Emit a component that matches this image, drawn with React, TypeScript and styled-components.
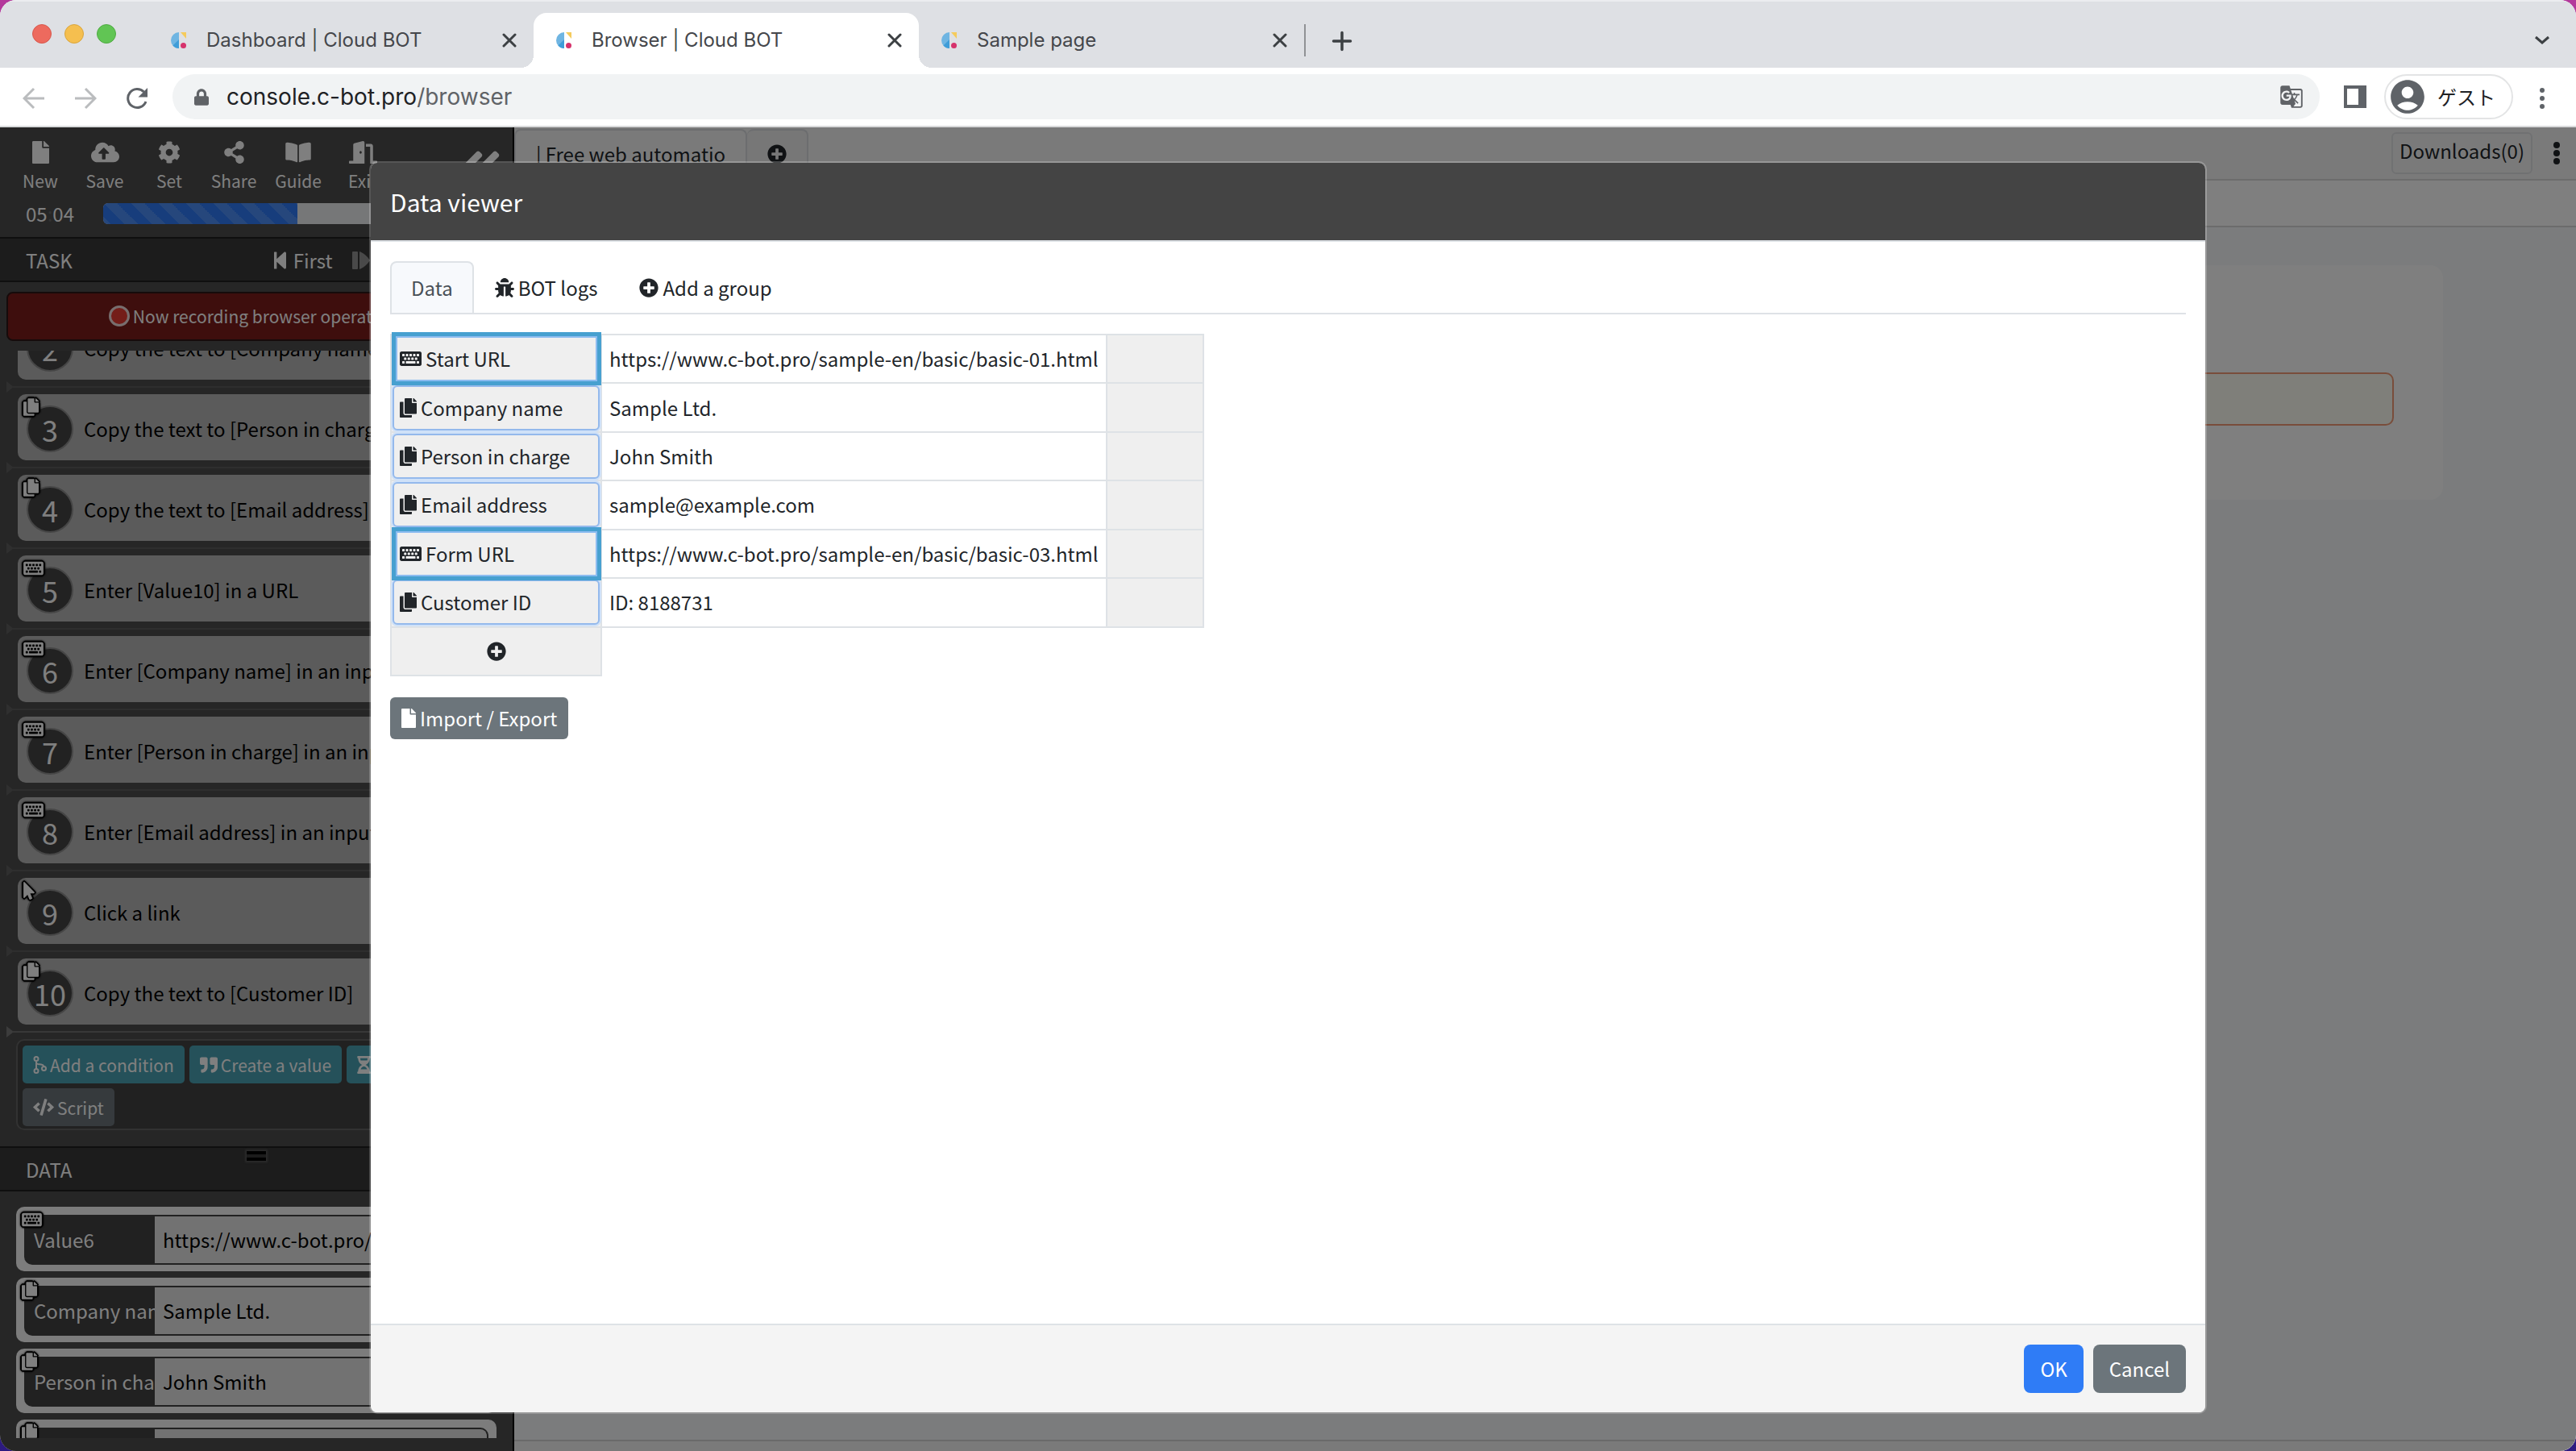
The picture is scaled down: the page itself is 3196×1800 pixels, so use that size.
import React from "react";
import styled, { createGlobalStyle, css } from "styled-components";
import {
  FaAngleDoubleLeft,
  FaBookOpen,
  FaBug,
  FaCloudUploadAlt,
  FaCode,
  FaCog,
  FaCopy,
  FaDoorOpen,
  FaFile,
  FaHourglassHalf,
  FaKeyboard,
  FaLock,
  FaMousePointer,
  FaPlusCircle,
  FaQuoteRight,
  FaShareAlt,
  FaStepBackward,
} from "react-icons/fa";
import { MdAccountCircle, MdGTranslate } from "react-icons/md";

const uiFont = `"Noto Sans CJK JP", "Noto Sans", sans-serif`;
const chromeFont = `Inter, "Noto Sans CJK JP", sans-serif`;

const GlobalStyle = createGlobalStyle`
  *, *::before, *::after { box-sizing: border-box; }
  body { margin: 0; background: linear-gradient(180deg, #b3399b 0%, #7a3aa8 50%, #2c1a80 100%); }
  button, input { font: inherit; color: inherit; margin: 0; padding: 0; border: 0; background: none; }
  button { cursor: pointer; }
  ul, ol { list-style: none; margin: 0; padding: 0; }
  h1, h2 { margin: 0; font-weight: 400; }
  svg { display: block; flex: none; }
`;

/* ---------- glyphs: each has its own width on a 512-unit height ---------- */

const glyphs = {
  file: [FaFile, 384],
  cloud: [FaCloudUploadAlt, 640],
  cog: [FaCog, 512],
  share: [FaShareAlt, 448],
  book: [FaBookOpen, 576],
  door: [FaDoorOpen, 640],
  collapse: [FaAngleDoubleLeft, 448],
  first: [FaStepBackward, 448],
  copy: [FaCopy, 448],
  keyboard: [FaKeyboard, 576],
  pointer: [FaMousePointer, 320],
  quote: [FaQuoteRight, 512],
  hourglass: [FaHourglassHalf, 384],
  code: [FaCode, 640],
  bug: [FaBug, 512],
  plus: [FaPlusCircle, 512],
  lock: [FaLock, 448],
} as const;

type GlyphName = keyof typeof glyphs;

const GlyphBox = styled.span<{ $w: number; $h: number }>`
  display: block;
  flex: none;
  svg {
    width: ${(p) => p.$w}px;
    height: ${(p) => p.$h}px;
  }
`;

const Glyph = ({ name, size = 24 }: { name: GlyphName; size?: number }) => {
  const [Icon, units] = glyphs[name];
  return (
    <GlyphBox $w={Math.round((size * units) / 512)} $h={size}>
      <Icon aria-hidden="true" />
    </GlyphBox>
  );
};

/* ---------- window and tab strip ---------- */

const Window = styled.div`
  display: flex;
  flex-direction: column;
  height: 100vh;
  overflow: hidden;
  border-radius: 20px;
  font: 400 24px/36px ${uiFont};
  color: #212529;
  background: #fff;
`;

const TabStrip = styled.header`
  display: flex;
  align-items: center;
  height: 84px;
  flex: none;
  padding: 0 30px 0 40px;
  background: #dee0e4;
  box-shadow: inset 0 2px 0 #ebecef;
  font-family: ${chromeFont};
`;

const Lights = styled.div`
  display: flex;
  gap: 16px;
  width: 144px;
`;

const Light = styled.button<{ $fill: string; $edge: string }>`
  width: 24px;
  height: 24px;
  border-radius: 50%;
  background: ${(p) => p.$fill};
  border: 1px solid ${(p) => p.$edge};
`;

const StripRow = styled.div`
  display: flex;
  flex: 1;
  align-items: center;
  padding-top: 16px;
`;

const TabList = styled.div`
  display: flex;
`;

const BrowserTab = styled.div<{ $active?: boolean }>`
  position: relative;
  display: flex;
  align-items: center;
  width: 478px;
  height: 68px;
  padding: 0 18px 0 28px;
  color: #45474b;
  ${(p) =>
    p.$active &&
    css`
      background: #fff;
      border-radius: 16px 16px 0 0;
      &::before,
      &::after {
        content: "";
        position: absolute;
        bottom: 0;
        width: 16px;
        height: 16px;
      }
      &::before {
        right: 100%;
        background: radial-gradient(circle at 0 0, transparent 16px, #fff 16px);
      }
      &::after {
        left: 100%;
        background: radial-gradient(circle at 100% 0, transparent 16px, #fff 16px);
      }
    `}
`;

const TabTitle = styled.button`
  flex: 1;
  padding-left: 24px;
  text-align: left;
  font-size: 24px;
  white-space: nowrap;
`;

const IconButton = styled.button`
  display: grid;
  place-items: center;
  flex: none;
  width: 24px;
  height: 24px;
`;

const TabDivider = styled.span`
  width: 2px;
  height: 40px;
  margin-right: 32px;
  background: #909295;
`;

const Spacer = styled.span`
  flex: 1;
`;

/* ---------- address row ---------- */

const AddressRow = styled.div`
  display: flex;
  align-items: center;
  height: 74px;
  flex: none;
  padding: 0 30px 0 28px;
  border-bottom: 2px solid #d8d9da;
  font-family: ${chromeFont};
`;

const NavButtons = styled.nav`
  display: flex;
  gap: 40px;
  width: 186px;
`;

const Omnibox = styled.div`
  display: flex;
  align-items: center;
  flex: 1;
  height: 56px;
  margin-right: 30px;
  padding: 0 20px 0 27px;
  border-radius: 28px;
  background: #f1f3f4;
  font-size: 28px;
  color: #606367;
`;

const Address = styled.span`
  flex: 1;
  padding-left: 22px;
  b {
    font-weight: 400;
    color: #202124;
  }
`;

const Profile = styled.button`
  display: flex;
  align-items: center;
  gap: 12px;
  height: 56px;
  margin: 0 24px 0 22px;
  padding: 0 20px 0 2px;
  border: 2px solid #e3e4e5;
  border-radius: 28px;
  color: #202124;
  font: 400 24px/36px ${uiFont};
  svg {
    color: #5f6368;
  }
`;

/* ---------- application ---------- */

const AppArea = styled.div`
  position: relative;
  display: flex;
  flex: 1;
  min-height: 0;
`;

const Sidebar = styled.aside`
  display: flex;
  flex-direction: column;
  flex: none;
  width: 638px;
  padding-bottom: 16px;
  border-right: 2px solid #000;
  background: #4c4c4c;
  color: #fff;
`;

const ToolRow = styled.div`
  display: flex;
  height: 90px;
  padding: 17px 14px 0 10px;
`;

const Tool = styled.button`
  display: flex;
  flex-direction: column;
  align-items: center;
  gap: 3px;
  width: 80px;
  font-size: 21px;
  line-height: 36px;
`;

const Collapse = styled.button`
  display: flex;
  margin-left: auto;
  padding-top: 2px;
`;

const TimerRow = styled.div`
  display: flex;
  align-items: center;
  gap: 36px;
  height: 46px;
  padding: 0 26px 12px 32px;
  i {
    font-style: normal;
    color: #646464;
  }
`;

const Progress = styled.div`
  flex: 1;
  height: 26px;
  overflow: hidden;
  border-radius: 6px;
  background: #eceef1;
`;

const ProgressFill = styled.div`
  height: 100%;
  background: #2e7af8
    linear-gradient(
      45deg,
      rgba(255, 255, 255, 0.15) 25%,
      transparent 25%,
      transparent 50%,
      rgba(255, 255, 255, 0.15) 50%,
      rgba(255, 255, 255, 0.15) 75%,
      transparent 75%
    );
  background-size: 34px 34px;
`;

const SectionBar = styled.div`
  position: relative;
  display: flex;
  align-items: center;
  flex: none;
  height: 56px;
  padding: 1px 32px 0;
  border: solid #1e1e1e;
  border-width: 2px 0;
  background: #383838;
`;

const SectionTitle = styled.h2`
  font-size: 24px;
  line-height: 36px;
`;

const StepButtons = styled.div`
  display: flex;
  gap: 24px;
  margin-left: 247px;
`;

const StepButton = styled.button`
  display: flex;
  align-items: center;
  gap: 6px;
  &:disabled {
    opacity: 0.45;
  }
`;

const Recording = styled.div`
  display: flex;
  align-items: center;
  justify-content: center;
  gap: 4px;
  flex: none;
  height: 61px;
  margin: 12px 16px 12px 8px;
  padding-bottom: 2px;
  border: 2px solid #2c1616;
  border-radius: 8px;
  background: #7d1d1a;
  font-size: 21px;
  line-height: 32px;
`;

const RecordDot = styled.span`
  width: 26px;
  height: 26px;
  border: 3px solid #f0dcdc;
  border-radius: 50%;
  background: #e83a32;
`;

const TaskList = styled.ol`
  display: flex;
  flex-direction: column;
  justify-content: flex-end;
  flex: 1;
  min-height: 0;
  overflow: hidden;
  padding: 0 20px 0 22px;
`;

const TaskItem = styled.li<{ $last?: boolean }>`
  position: relative;
  display: flex;
  align-items: center;
  gap: 13px;
  flex: none;
  height: 82px;
  margin-bottom: 18px;
  padding: 3px 0 0 11px;
  border-radius: 10px;
  background: #b6b6b6;
  color: #000;
  white-space: nowrap;
  &::before {
    content: "";
    position: absolute;
    left: -14px;
    top: 84px;
    border: solid transparent;
    border-width: 7px 0 7px 9px;
    border-left-color: ${(p) => (p.$last ? "#787878" : "#5e5e5e")};
  }
  &::after {
    content: "";
    position: absolute;
    left: -6px;
    right: 0;
    top: 90px;
    height: 2px;
    background: ${(p) => (p.$last ? "#707070" : "#5c5c5c")};
  }
`;

const TaskNumber = styled.span`
  display: grid;
  place-items: center;
  flex: none;
  width: 58px;
  height: 58px;
  border: 2px solid #8c8c8c;
  border-radius: 50%;
  background: #444;
  color: #fff;
  font-size: 36px;
`;

const Badge = styled.span`
  position: absolute;
  left: 7px;
  top: 5px;
  z-index: 1;
  color: #fff;
  filter: drop-shadow(1px 1px 0 #000) drop-shadow(-1px -1px 0 #000) drop-shadow(1px -1px 0 #000)
    drop-shadow(-1px 1px 0 #000) drop-shadow(0 0 1px #000);
`;

const ActionBox = styled.div`
  display: flex;
  flex-wrap: wrap;
  gap: 6px;
  flex: none;
  margin: 0 20px 20px;
  padding: 6px 6px 3px;
  border: 2px solid #646464;
  border-radius: 10px;
  background: #424242;
`;

const ActionButton = styled.button<{ $plain?: boolean }>`
  display: flex;
  align-items: center;
  gap: 4px;
  height: 47px;
  padding: 0 13px;
  border-radius: 5px;
  background: ${(p) => (p.$plain ? "#6c757b" : "#4aa2b4")};
  font-size: 21px;
`;

const Grip = styled.span`
  position: absolute;
  left: 50%;
  top: 4px;
  width: 24px;
  height: 12px;
  margin-left: -12px;
  border: solid #000;
  border-width: 4px 0;
  box-shadow: 0 0 2px 2px #555;
`;

const DataList = styled.ul`
  display: flex;
  flex-direction: column;
  gap: 8px;
  flex: none;
  height: 287px;
  margin: 19px 20px 0;
  overflow: hidden;
`;

const DataItem = styled.li`
  position: relative;
  flex: none;
  height: 80px;
  padding: 10px;
  border-radius: 10px;
  background: #f8f8f8;
`;

const DataFields = styled.div`
  display: flex;
  height: 62px;
  overflow: hidden;
  border: 2px solid #424242;
  border-radius: 10px;
  background: #424242;
`;

const NameField = styled.input`
  width: 160px;
  padding-left: 10px;
`;

const ValueField = styled.input`
  flex: 1;
  min-width: 0;
  padding-left: 10px;
  background: #e4e4e4;
  color: #000;
`;

/* ---------- remote page ---------- */

const Remote = styled.main`
  display: flex;
  flex-direction: column;
  flex: 1;
  min-width: 0;
  background: #f6f8fa;
`;

const RemoteTabs = styled.div`
  display: flex;
  align-items: flex-start;
  flex: none;
  height: 66px;
  padding: 2px 18px 0 0;
  border-bottom: 2px solid #d8d8d8;
  background: #f5f5f5;
`;

const RemoteTab = styled.button`
  height: 62px;
  padding: 0 25px 2px;
  border: 2px solid #d8dade;
  border-bottom: 0;
  border-radius: 8px 8px 0 0;
  & + & {
    border-left: 0;
    background: #eee;
  }
`;

const Downloads = styled.button`
  height: 52px;
  margin: 4px 24px 0 auto;
  padding: 0 8px 6px;
  border: 2px solid #e0e2e5;
  border-radius: 6px;
  color: #212529;
`;

const MenuDots = styled.button`
  display: grid;
  place-items: center;
  width: 12px;
  height: 60px;
`;

const RemoteBar = styled.div`
  flex: none;
  height: 58px;
  border-bottom: 2px solid #d8d8d8;
  background: #fff;
`;

const RemotePage = styled.div`
  flex: 1;
  min-height: 0;
  padding: 47px 165px 0;
`;

const SampleCard = styled.section`
  height: 291px;
  padding: 133px 61px 0;
  border-radius: 16px;
  background: #fff;
`;

const SampleInput = styled.input`
  display: block;
  width: 100%;
  height: 66px;
  border: 2px solid #f29b76;
  border-radius: 10px;
  background: #fefff4;
`;

const RemoteFoot = styled.div`
  flex: none;
  height: 14px;
  border-top: 2px solid #d4d4d4;
  background: #f5f5f5;
`;

/* ---------- modal ---------- */

const Overlay = styled.div`
  position: absolute;
  inset: 0;
  z-index: 2;
  display: flex;
  padding: 42px 458px 46px;
  background: rgba(0, 0, 0, 0.5);
`;

const Modal = styled.section`
  display: flex;
  flex-direction: column;
  flex: 1;
  min-width: 0;
  overflow: hidden;
  border: 2px solid rgba(255, 255, 255, 0.22);
  border-radius: 10px;
  background: #fff;
  background-clip: padding-box;
`;

const ModalHeader = styled.header`
  flex: none;
  height: 98px;
  padding: 24px;
  border-bottom: 2px solid #dee2e6;
  background: #444;
  color: #fff;
  h1 {
    font-size: 30px;
    line-height: 48px;
  }
`;

const ModalBody = styled.div`
  flex: 1;
  min-height: 0;
  padding: 24px;
`;

const Tabs = styled.div`
  display: flex;
  height: 66px;
  margin-bottom: 24px;
  border-bottom: 2px solid #dee2e6;
`;

const ViewTab = styled.button<{ $active?: boolean }>`
  display: flex;
  align-items: center;
  gap: 5px;
  padding: 0 24px;
  border: 2px solid transparent;
  border-bottom: 0;
  border-radius: 8px 8px 0 0;
  ${(p) =>
    p.$active &&
    css`
      border-color: #dee2e6;
      background: #f7f9fc;
      color: #495057;
    `}
`;

const DataTable = styled.table`
  height: 425px;
  border-collapse: collapse;
  td,
  th {
    height: 60px;
    padding: 0;
    border: 2px solid #dee2e6;
    font-weight: 400;
    text-align: left;
    white-space: nowrap;
  }
  td {
    padding: 0 9px;
  }
`;

const NameCell = styled.th`
  background: #efefef;
`;

const BlankCell = styled.td`
  width: 120px;
  background: #efefef;
`;

const EmptyCell = styled.td`
  && {
    border: 0;
  }
`;

const NameButton = styled.button<{ $strong: boolean }>`
  position: relative;
  display: flex;
  align-items: center;
  width: 257px;
  height: 56px;
  margin: 0 1px;
  padding-left: 7px;
  gap: 5px;
  border: 2px solid #94b9ec;
  border-radius: 6px;
  background: #efefef;
  box-shadow: 0 0 0 2px #cfe1f8;
  ${(p) =>
    p.$strong &&
    css`
      z-index: 1;
      width: 260px;
      margin: 0 -1px 0 0;
      padding-left: 5px;
      border: solid #47a0d0;
      border-width: 0 5px;
      border-radius: 0;
      box-shadow: inset 0 0 0 2px #8cbcf0, 0 -5px 0 #47a0d0, 0 5px 0 #47a0d0;
    `}
`;

const AddRow = styled.button`
  display: grid;
  place-items: center;
  width: 100%;
  height: 56px;
`;

const ExportButton = styled.button`
  display: flex;
  align-items: center;
  gap: 5px;
  height: 52px;
  margin-top: 26px;
  padding: 0 14px;
  border-radius: 6px;
  background: #6c757b;
  color: #fff;
`;

const ModalFooter = styled.footer`
  display: flex;
  justify-content: flex-end;
  gap: 12px;
  flex: none;
  height: 110px;
  padding: 24px;
  border-top: 2px solid #dee2e6;
  background: #f4f4f4;
`;

const FooterButton = styled.button<{ $primary?: boolean }>`
  height: 60px;
  padding: 0 20px;
  border-radius: 8px;
  background: ${(p) => (p.$primary ? "#2f7cf6" : "#6c757b")};
  color: #fff;
`;

/* ---------- drawings ---------- */

const Favicon = () => (
  <svg width="20" height="20" viewBox="0 0 20 20" aria-hidden="true">
    <path d="M10 0a10 10 0 0 0 0 20z" fill="#6fb5e2" />
    <path d="M10 9L2.4 16.500A10 10 0 0 0 10 20z" fill="#3f9dd8" />
    <path d="M12 0h7v8z" fill="#f5cb5c" />
    <circle cx="15.500" cy="16.500" r="3.500" fill="#d6336c" />
  </svg>
);

const Cross = () => (
  <svg width="18" height="18" viewBox="0 0 18 18" aria-hidden="true">
    <path d="M2 2l14 14M16 2L2 16" stroke="#3c4043" strokeWidth="3" strokeLinecap="round" />
  </svg>
);

const Plus = () => (
  <svg width="26" height="26" viewBox="0 0 26 26" aria-hidden="true">
    <path d="M13 2.500v21M2.500 13h21" stroke="#3c4043" strokeWidth="3.500" strokeLinecap="round" />
  </svg>
);

const Chevron = () => (
  <svg width="20" height="12" viewBox="0 0 20 12" aria-hidden="true">
    <path d="M2 2l8 7 8-7" fill="none" stroke="#3c4043" strokeWidth="3" />
  </svg>
);

const Arrow = ({ flip = false }: { flip?: boolean }) => (
  <svg width="28" height="28" viewBox="0 0 28 28" aria-hidden="true">
    <path
      d={flip ? "M1 14h25M14 2l12 12-12 12" : "M27 14H2M14 2L2 14l12 12"}
      fill="none"
      stroke="#babcbe"
      strokeWidth="3"
    />
  </svg>
);

const Reload = () => (
  <svg width="28" height="28" viewBox="0 0 28 28" aria-hidden="true">
    <path d="M25 18A11.500 11.500 0 1 1 22.500 6" fill="none" stroke="#5f6368" strokeWidth="3" />
    <path d="M27 1v11.500H15.500z" fill="#5f6368" />
  </svg>
);

const SidePanel = () => (
  <svg width="28" height="28" viewBox="0 0 28 28" aria-hidden="true">
    <path d="M0 0h28v28H0zM4 4v20h14V4z" fill="#5f6368" fillRule="evenodd" />
  </svg>
);

const Dots = ({ r, gap, color }: { r: number; gap: number; color: string }) => (
  <svg width="8" height="28" viewBox="0 0 8 28" aria-hidden="true">
    {[-gap, 0, gap].map((d) => (
      <circle key={d} cx="4" cy={14 + d} r={r} fill={color} />
    ))}
  </svg>
);

const Branch = () => (
  <svg
    width="17"
    height="22"
    viewBox="0 0 17 22"
    aria-hidden="true"
    fill="none"
    stroke="#fff"
    strokeWidth="2"
  >
    <circle cx="4" cy="3.500" r="2.500" />
    <circle cx="4" cy="18.500" r="2.500" />
    <circle cx="13.500" cy="15.500" r="2.500" />
    <path d="M4 6v10M4 7c0 4 3 3 6 3.500 2 .3 3 1 3.500 2.500" />
  </svg>
);

const StepOne = () => (
  <svg width="22" height="22" viewBox="0 0 22 22" aria-hidden="true" fill="#fff">
    <rect x="0" y="0" width="7" height="22" rx="1" />
    <path d="M9 0c5 2 9 5 13 11-4 6-8 9-13 11z" />
  </svg>
);

/* ---------- content ---------- */

const tools: { label: string; icon: GlyphName }[] = [
  { label: "New", icon: "file" },
  { label: "Save", icon: "cloud" },
  { label: "Set", icon: "cog" },
  { label: "Share", icon: "share" },
  { label: "Guide", icon: "book" },
  { label: "Exit", icon: "door" },
];

const tasks: { n: number; text: string; icon: GlyphName }[] = [
  { n: 2, text: "Copy the text to [Company name]", icon: "copy" },
  { n: 3, text: "Copy the text to [Person in charge]", icon: "copy" },
  { n: 4, text: "Copy the text to [Email address]", icon: "copy" },
  { n: 5, text: "Enter [Value10] in a URL", icon: "keyboard" },
  { n: 6, text: "Enter [Company name] in an input", icon: "keyboard" },
  { n: 7, text: "Enter [Person in charge] in an input", icon: "keyboard" },
  { n: 8, text: "Enter [Email address] in an input", icon: "keyboard" },
  { n: 9, text: "Click a link", icon: "pointer" },
  { n: 10, text: "Copy the text to [Customer ID]", icon: "copy" },
];

const sideData: { name: string; value: string; icon: GlyphName }[] = [
  { name: "Value6", value: "https://www.c-bot.pro/sample-en/", icon: "keyboard" },
  { name: "Company name", value: "Sample Ltd.", icon: "copy" },
  { name: "Person in charge", value: "John Smith", icon: "copy" },
  { name: "", value: "", icon: "copy" },
];

const rows = [
  { name: "Start URL", value: "https://www.c-bot.pro/sample-en/basic/basic-01.html", typed: true },
  { name: "Company name", value: "Sample Ltd.", typed: false },
  { name: "Person in charge", value: "John Smith", typed: false },
  { name: "Email address", value: "sample@example.com", typed: false },
  { name: "Form URL", value: "https://www.c-bot.pro/sample-en/basic/basic-03.html", typed: true },
  { name: "Customer ID", value: "ID: 8188731", typed: false },
];

const browserTabs = ["Dashboard | Cloud BOT", "Browser | Cloud BOT", "Sample page"];

export default function App() {
  return (
    <>
      <GlobalStyle />
      <Window>
        <TabStrip>
          <Lights>
            <Light $fill="#ed6a5e" $edge="#d8574c" aria-label="Close window" />
            <Light $fill="#f5bf4f" $edge="#d9a53c" aria-label="Minimize window" />
            <Light $fill="#61c554" $edge="#4fab42" aria-label="Zoom window" />
          </Lights>
          <StripRow>
            <TabList>
              {browserTabs.map((title, i) => (
                <BrowserTab key={title} $active={i === 1}>
                  <Favicon />
                  <TabTitle>{title}</TabTitle>
                  <IconButton aria-label={`Close ${title}`}>
                    <Cross />
                  </IconButton>
                </BrowserTab>
              ))}
            </TabList>
            <TabDivider />
            <IconButton aria-label="New tab">
              <Plus />
            </IconButton>
            <Spacer />
            <IconButton aria-label="Search tabs">
              <Chevron />
            </IconButton>
          </StripRow>
        </TabStrip>

        <AddressRow>
          <NavButtons>
            <IconButton aria-label="Back">
              <Arrow />
            </IconButton>
            <IconButton aria-label="Forward">
              <Arrow flip />
            </IconButton>
            <IconButton aria-label="Reload">
              <Reload />
            </IconButton>
          </NavButtons>
          <Omnibox>
            <Glyph name="lock" size={21} />
            <Address>
              <b>console.c-bot.pro</b>/browser
            </Address>
            <MdGTranslate size={30} />
          </Omnibox>
          <SidePanel />
          <Profile>
            <MdAccountCircle size={50} />
            ゲスト
          </Profile>
          <IconButton aria-label="Browser menu">
            <Dots r={3} gap={10} color="#5f6368" />
          </IconButton>
        </AddressRow>

        <AppArea>
          <Sidebar>
            <ToolRow>
              {tools.map(({ label, icon }) => (
                <Tool key={label}>
                  <Glyph name={icon} size={28} />
                  {label}
                </Tool>
              ))}
              <Collapse aria-label="Collapse sidebar">
                <Glyph name="collapse" size={56} />
              </Collapse>
            </ToolRow>
            <TimerRow>
              <span>
                05<i>:</i>04
              </span>
              <Progress role="progressbar" aria-valuenow={50} aria-label="Time left">
                <ProgressFill style={{ width: "50%" }} />
              </Progress>
            </TimerRow>
            <SectionBar>
              <SectionTitle>TASK</SectionTitle>
              <StepButtons>
                <StepButton>
                  <Glyph name="first" />
                  First
                </StepButton>
                <StepButton disabled aria-label="Next step">
                  <StepOne />
                </StepButton>
              </StepButtons>
            </SectionBar>
            <Recording>
              <RecordDot />
              Now recording browser operation
            </Recording>
            <TaskList>
              {tasks.map(({ n, text, icon }) => (
                <TaskItem key={n} $last={n === 10}>
                  <Badge>
                    <Glyph name={icon} size={22} />
                  </Badge>
                  <TaskNumber>{n}</TaskNumber>
                  {text}
                </TaskItem>
              ))}
            </TaskList>
            <ActionBox>
              <ActionButton>
                <Branch />
                Add a condition
              </ActionButton>
              <ActionButton>
                <Glyph name="quote" size={22} />
                Create a value
              </ActionButton>
              <ActionButton>
                <Glyph name="hourglass" size={22} />
                Wait
              </ActionButton>
              <ActionButton $plain>
                <Glyph name="code" size={21} />
                Script
              </ActionButton>
            </ActionBox>
            <SectionBar>
              <SectionTitle>DATA</SectionTitle>
              <Grip />
            </SectionBar>
            <DataList>
              {sideData.map(({ name, value, icon }, i) => (
                <DataItem key={i}>
                  <Badge>
                    <Glyph name={icon} size={22} />
                  </Badge>
                  <DataFields>
                    <NameField aria-label="Data name" defaultValue={name} />
                    <ValueField aria-label={`Value of ${name}`} defaultValue={value} />
                  </DataFields>
                </DataItem>
              ))}
            </DataList>
          </Sidebar>

          <Remote>
            <RemoteTabs>
              <RemoteTab>| Free web automatio</RemoteTab>
              <RemoteTab aria-label="Open a tab">
                <Glyph name="plus" />
              </RemoteTab>
              <Downloads>Downloads(0)</Downloads>
              <MenuDots aria-label="More">
                <Dots r={4} gap={10} color="#212529" />
              </MenuDots>
            </RemoteTabs>
            <RemoteBar />
            <RemotePage>
              <SampleCard>
                <SampleInput aria-label="Sample field" />
              </SampleCard>
            </RemotePage>
            <RemoteFoot />
          </Remote>

          <Overlay>
            <Modal role="dialog" aria-label="Data viewer">
              <ModalHeader>
                <h1>Data viewer</h1>
              </ModalHeader>
              <ModalBody>
                <Tabs role="tablist">
                  <ViewTab $active role="tab" aria-selected="true">
                    Data
                  </ViewTab>
                  <ViewTab role="tab">
                    <Glyph name="bug" />
                    BOT logs
                  </ViewTab>
                  <ViewTab role="tab">
                    <Glyph name="plus" />
                    Add a group
                  </ViewTab>
                </Tabs>
                <DataTable>
                  <tbody>
                    {rows.map(({ name, value, typed }) => (
                      <tr key={name}>
                        <NameCell scope="row">
                          <NameButton $strong={typed}>
                            <Glyph name={typed ? "keyboard" : "copy"} />
                            {name}
                          </NameButton>
                        </NameCell>
                        <td>{value}</td>
                        <BlankCell />
                      </tr>
                    ))}
                    <tr>
                      <NameCell>
                        <AddRow aria-label="Add a row">
                          <Glyph name="plus" />
                        </AddRow>
                      </NameCell>
                      <EmptyCell />
                      <EmptyCell />
                    </tr>
                  </tbody>
                </DataTable>
                <ExportButton>
                  <Glyph name="file" />
                  Import / Export
                </ExportButton>
              </ModalBody>
              <ModalFooter>
                <FooterButton $primary>OK</FooterButton>
                <FooterButton>Cancel</FooterButton>
              </ModalFooter>
            </Modal>
          </Overlay>
        </AppArea>
      </Window>
    </>
  );
}
